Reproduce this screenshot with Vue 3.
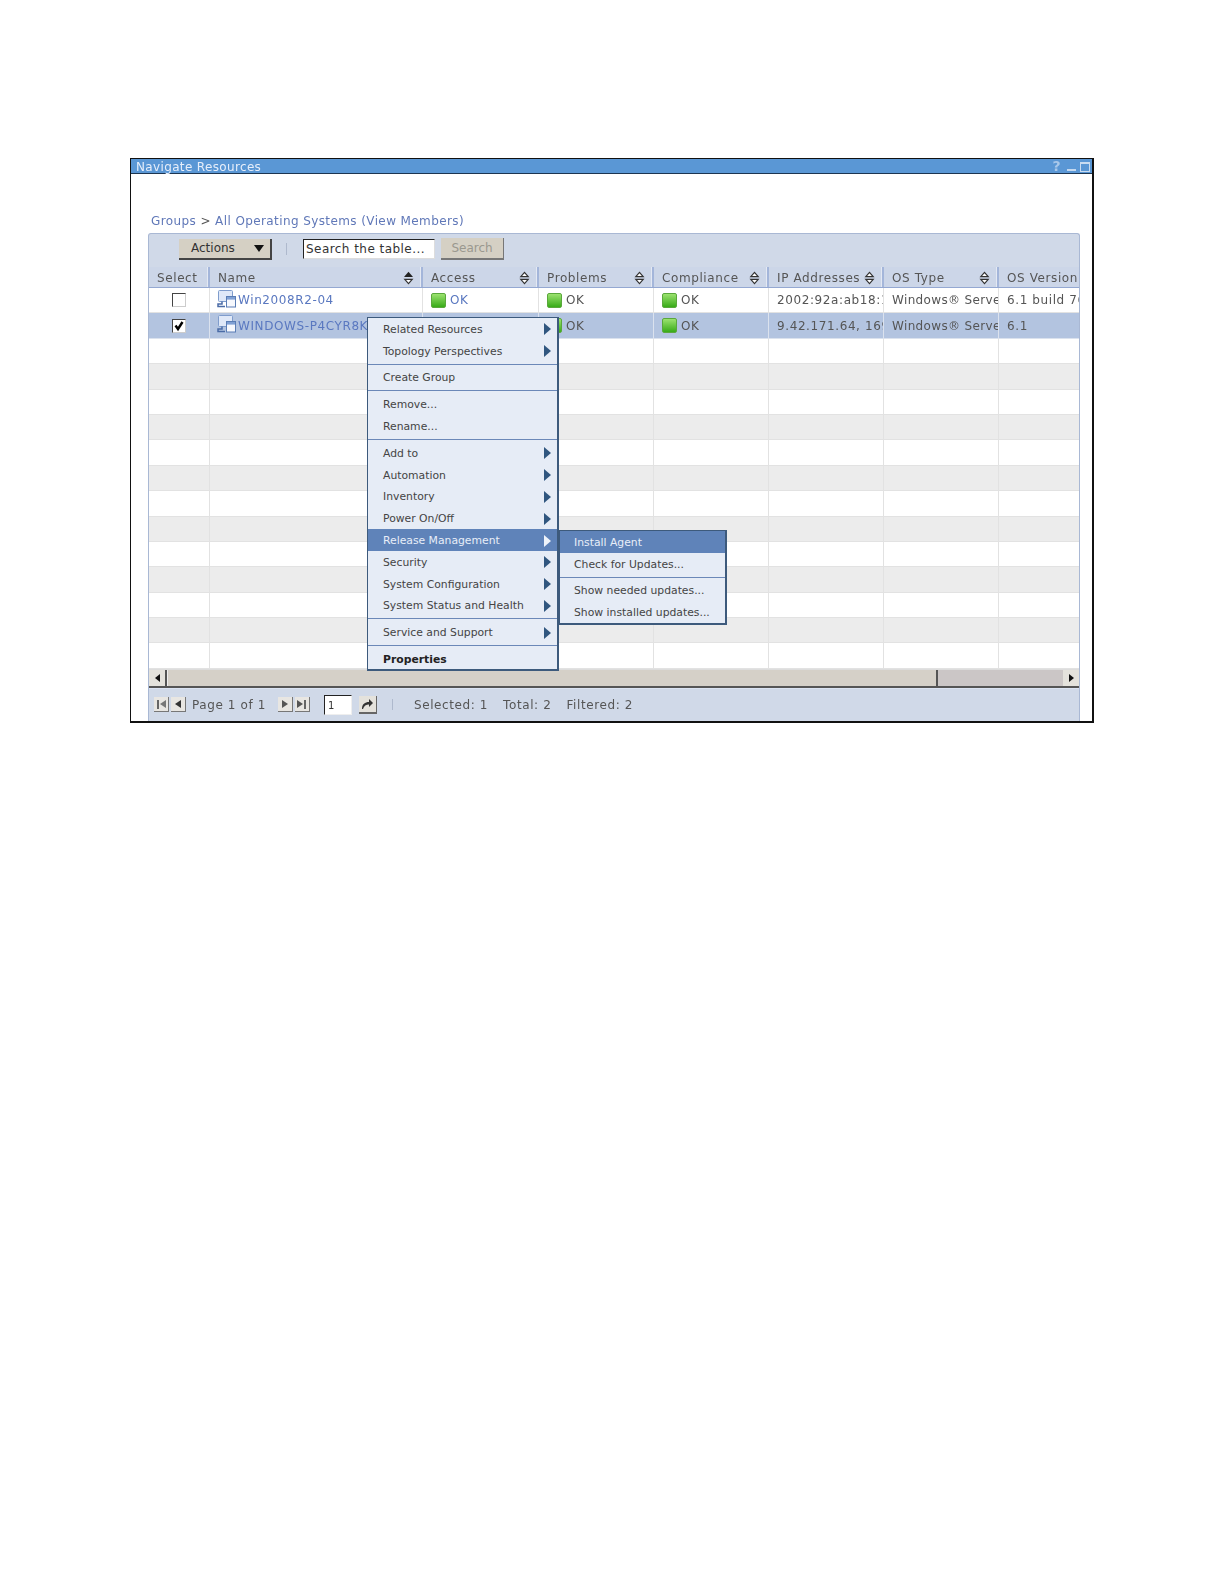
<script setup>
const columns = [
  { label: 'Select', width: 61, sort: '' },
  { label: 'Name', width: 213, sort: 'active' },
  { label: 'Access', width: 116, sort: 'both' },
  { label: 'Problems', width: 115, sort: 'both' },
  { label: 'Compliance', width: 115, sort: 'both' },
  { label: 'IP Addresses', width: 115, sort: 'both' },
  { label: 'OS Type', width: 115, sort: 'both' },
  { label: 'OS Version', width: 83, sort: '' },
]
const rows = [
  { name: 'Win2008R2-04', ip: '2002:92a:ab18:1:0:0', os: 'Windows® Server 2008', version: '6.1 build 7600', selected: false },
  { name: 'WINDOWS-P4CYR8K', ip: '9.42.171.64, 169.254.0.1', os: 'Windows® Server 2008', version: '6.1', selected: true },
]
const emptyRows = Array.from({ length: 13 }, (_, i) => i)
const menu = [
  [{ t: 'Related Resources', sub: true }, { t: 'Topology Perspectives', sub: true }],
  [{ t: 'Create Group' }],
  [{ t: 'Remove...' }, { t: 'Rename...' }],
  [
    { t: 'Add to', sub: true }, { t: 'Automation', sub: true }, { t: 'Inventory', sub: true },
    { t: 'Power On/Off', sub: true }, { t: 'Release Management', sub: true, active: true },
    { t: 'Security', sub: true }, { t: 'System Configuration', sub: true }, { t: 'System Status and Health', sub: true },
  ],
  [{ t: 'Service and Support', sub: true }],
  [{ t: 'Properties', bold: true }],
]
const submenu = [
  [{ t: 'Install Agent', active: true }, { t: 'Check for Updates...' }],
  [{ t: 'Show needed updates...' }, { t: 'Show installed updates...' }],
]
</script>

<template>
  <div class="page">
    <section class="window">
      <header class="titlebar">
        <span class="title">Navigate Resources</span>
        <span class="controls">
          <span class="help">?</span>
          <span class="min"></span>
          <span class="max"></span>
        </span>
      </header>
      <div class="content">
        <div class="crumbs">Groups <span class="gt">&gt;</span> All Operating Systems (View Members)</div>
        <div class="panel">
          <div class="toolbar">
            <button class="actions"><span>Actions</span><i class="caret"></i></button>
            <span class="tool-sep"></span>
            <span class="search-input">Search the table...</span>
            <button class="search-btn">Search</button>
          </div>
          <div class="grid">
            <div class="head">
              <div v-for="c in columns" :key="c.label" class="hcell" :style="{ width: c.width + 'px' }">
                <span class="hlabel">{{ c.label }}</span>
                <svg v-if="c.sort" class="sort" width="11" height="14" viewBox="0 0 11 14">
                  <path v-if="c.sort === 'active'" d="M5.5 0.8 L10 6 H1 Z" fill="#222" />
                  <path v-else d="M5.5 1.4 L9.2 5.6 H1.8 Z" fill="#fff" stroke="#333" stroke-width="1.2" />
                  <path d="M5.5 12.6 L9.2 8.4 H1.8 Z" fill="#fff" stroke="#333" stroke-width="1.2" />
                </svg>
              </div>
            </div>
            <div v-for="r in rows" :key="r.name" class="row" :class="{ selected: r.selected }">
              <div class="cell" :style="{ width: columns[0].width + 'px' }">
                <span class="check" :class="{ on: r.selected }">
                  <svg v-if="r.selected" width="12" height="12" viewBox="0 0 12 12"><path d="M2.5 5.5 L5 9 L9.5 2" fill="none" stroke="#000" stroke-width="2.4" /></svg>
                </span>
              </div>
              <div class="cell name" :style="{ width: columns[1].width + 'px' }">
                <svg class="os-icon" width="20" height="18" viewBox="0 0 20 18">
                  <rect x="1.5" y="0.5" width="14" height="11" rx="1" fill="#dfe8f8" stroke="#7f9ccc" />
                  <path d="M5 11.5 V14 H1 V16.5 H8" fill="none" stroke="#4a6ba6" stroke-width="1.5" />
                  <rect x="9.5" y="6.5" width="9" height="10.5" fill="#f6f8fd" stroke="#5a7db5" />
                  <rect x="10" y="7" width="8" height="2.6" fill="#7fa0d4" />
                </svg>
                <a class="link">{{ r.name }}</a>
              </div>
              <div v-for="(w, i) in [116, 115, 115]" :key="i" class="cell" :style="{ width: w + 'px' }">
                <span class="ok-icon"></span>
                <span :class="i === 0 ? 'ok-link' : 'ok'">OK</span>
              </div>
              <div class="cell text" :style="{ width: columns[5].width + 'px' }">{{ r.ip }}</div>
              <div class="cell text os" :style="{ width: columns[6].width + 'px' }">{{ r.os }}</div>
              <div class="cell text" :style="{ width: columns[7].width + 'px' }">{{ r.version }}</div>
            </div>
            <div v-for="n in emptyRows" :key="n" class="row empty" :class="{ alt: n % 2 === 1 }">
              <div v-for="c in columns" :key="c.label" class="cell" :style="{ width: c.width + 'px' }"></div>
            </div>
          </div>
          <div class="scrollbar">
            <span class="sb-btn first"><i class="tri left"></i></span>
            <span class="thumb"></span>
            <span class="track"></span>
            <span class="sb-btn"><i class="tri right"></i></span>
          </div>
          <footer class="pager">
            <span class="pg-group">
              <span class="pg-btn"><i class="bar"></i><i class="tri left small"></i></span>
              <span class="pg-btn"><i class="tri left small dark"></i></span>
            </span>
            <span class="pg-text page-of">Page 1 of 1</span>
            <span class="pg-group next">
              <span class="pg-btn"><i class="tri right small"></i></span>
              <span class="pg-btn"><i class="tri right small"></i><i class="bar"></i></span>
            </span>
            <span class="pg-input">1</span>
            <span class="go">
              <svg width="14" height="13" viewBox="0 0 14 13"><path d="M2 12 C2 7 5 5 9 5 V2 L13 6 L9 10 V7.4 C6 7.4 4 8.5 3 12 Z" fill="#333" /></svg>
            </span>
            <span class="pg-sep"></span>
            <span class="pg-text stat">Selected: 1</span>
            <span class="pg-text stat">Total: 2</span>
            <span class="pg-text stat">Filtered: 2</span>
          </footer>
        </div>
      </div>
      <nav class="menu main-menu">
        <div v-for="(g, gi) in menu" :key="gi" class="group">
          <div v-for="it in g" :key="it.t" class="item" :class="{ active: it.active, bold: it.bold }">
            <span>{{ it.t }}</span>
            <i v-if="it.sub" class="arrow"></i>
          </div>
        </div>
      </nav>
      <nav class="menu sub-menu">
        <div v-for="(g, gi) in submenu" :key="gi" class="group">
          <div v-for="it in g" :key="it.t" class="item" :class="{ active: it.active }">
            <span>{{ it.t }}</span>
          </div>
        </div>
      </nav>
    </section>
  </div>
</template>

<style>
html, body { background: #fff; }
</style>

<style scoped>
.page {
  width: 1224px;
  height: 1584px;
  padding: 158px 0 0 130px;
  box-sizing: border-box;
  font-family: "DejaVu Sans", Verdana, sans-serif;
  font-size: 11px;
  color: #555;
  overflow: hidden;
  background: #fff;
}
.window {
  position: relative;
  width: 964px;
  height: 565px;
  box-sizing: border-box;
  border: 1px solid #111;
  border-width: 1px 2px 2px 1px;
  filter: blur(0.45px);
}
.titlebar {
  height: 15px;
  background: #5a97d5;
  border-bottom: 1px solid #1d3550;
  box-sizing: border-box;
  display: flex;
  align-items: center;
  justify-content: space-between;
  padding: 1px 2px 0 5px;
  color: #e6eefa;
  font-size: 12px;
  letter-spacing: 0.35px;
}
.controls { display: flex; align-items: center; gap: 5px; }
.help { color: #a9c8ea; font-weight: bold; font-size: 14px; line-height: 13px; margin-right: 1px; }
.min { width: 9px; height: 2px; background: #c3d8ef; margin-top: 7px; }
.max { width: 8px; height: 7px; border: 1px solid #c9dcf1; border-top-width: 2px; margin-left: -1px; }
.content { padding: 38px 12px 0 17px; }
.crumbs {
  height: 21px;
  color: #6078b8;
  font-size: 12px;
  letter-spacing: 0.4px;
  padding-left: 3px;
  line-height: 18px;
}
.gt { color: #555; }
.panel {
  background: #d0d9e8;
  border: 1px solid #a9b8d4;
  border-bottom: 0;
  border-radius: 3px 3px 0 0;
  height: 488px;
  box-sizing: border-box;
  overflow: hidden;
}
.toolbar {
  height: 33px;
  display: flex;
  align-items: center;
  padding: 0 0 3px 30px;
  box-sizing: border-box;
}
.actions {
  width: 93px;
  height: 21px;
  padding: 0 6px 0 12px;
  display: flex;
  align-items: center;
  justify-content: space-between;
  background: #d5d0c4;
  border: 0;
  border-right: 2px solid #444;
  border-bottom: 2px solid #444;
  font: 12px "DejaVu Sans", sans-serif;
  color: #333;
}
.caret { border: 5.5px solid transparent; border-top: 7px solid #111; border-bottom: 0; }
.tool-sep { width: 1px; height: 12px; background: #aeb9cd; margin: 0 16px 0 14px; }
.search-input {
  width: 132px;
  height: 20px;
  box-sizing: border-box;
  background: #fff;
  border: 1px solid #222;
  border-right-color: #ddd;
  border-bottom-color: #ddd;
  padding-left: 2px;
  line-height: 18px;
  font-size: 12px;
  letter-spacing: 0.45px;
  color: #333;
  white-space: nowrap;
  overflow: hidden;
}
.search-btn {
  width: 63px;
  height: 22px;
  margin-left: 6px;
  padding: 0;
  border: 0;
  background: #d5d0c4;
  border-right: 1px solid #777;
  border-bottom: 2px solid #777;
  color: #9a988f;
  font: 12px "DejaVu Sans", sans-serif;
}
.head {
  display: flex;
  height: 21px;
  background: #ccd6e8;
  border-bottom: 1px solid #94a8d2;
  box-sizing: border-box;
  overflow: hidden;
}
.hcell {
  flex: none;
  display: flex;
  align-items: center;
  justify-content: space-between;
  box-sizing: border-box;
  padding: 2px 7px 0 8px;
  border-right: 2px solid #a4b6da;
  box-shadow: inset -1px 0 0 #e4e9f3;
  overflow: hidden;
  white-space: nowrap;
  font-size: 12px;
  letter-spacing: 0.6px;
  color: #555;
}
.hcell:last-child { border-right: 0; box-shadow: none; padding-right: 0; }
.row {
  display: flex;
  height: 25.4px;
  background: #fff;
  box-sizing: border-box;
  border-bottom: 1px solid #e2e2e2;
  overflow: hidden;
}
.row.alt { background: #ececec; }
.row.selected { background: #b3c4e0; border-bottom-color: #dbe2ee; }
.cell {
  display: flex;
  align-items: center;
  box-sizing: border-box;
  flex: none;
  padding: 0 0 0 8px;
  border-right: 1px solid #e2e2e2;
  overflow: hidden;
  white-space: nowrap;
  font-size: 12px;
  letter-spacing: 0.6px;
  color: #555;
}
.cell.os { letter-spacing: 0.35px; }
.cell:last-child { border-right: 0; }
.row.selected .cell { border-right-color: #dbe2ee; }
.cell:first-child { justify-content: center; padding: 0; }
.check {
  width: 14px;
  height: 14px;
  box-sizing: border-box;
  background: #fff;
  border: 1px solid #444;
  border-right-color: #ccc;
  border-bottom-color: #ccc;
  display: flex;
  align-items: center;
  justify-content: center;
}
.name { padding-left: 7px; }
.os-icon { flex: none; margin: -3px 1px 0 0; }
.link, .ok-link { color: #5a78c0; }
.ok-icon {
  width: 15px;
  height: 15px;
  flex: none;
  border-radius: 2px;
  background: linear-gradient(#9be26f, #38ab18);
  border: 1px solid #5aa83c;
  box-sizing: border-box;
  margin-right: 4px;
}
.scrollbar {
  display: flex;
  height: 19px;
  background: #cbc6c6;
  border-bottom: 2px solid #555;
  border-top: 1px solid #ddd;
  box-sizing: border-box;
}
.sb-btn {
  width: 16px;
  background: #e4e2dc;
  display: flex;
  align-items: center;
  justify-content: center;
  box-sizing: border-box;
}
.sb-btn.first { width: 18px; border-right: 2px solid #555; }
.thumb {
  width: 771px;
  background: #d5d0c8;
  border-right: 2px solid #555;
  border-left: 1px solid #eee;
  box-sizing: border-box;
}
.track { flex: 1; }
.tri { display: inline-block; border: 4px solid transparent; border-left: 0; border-right: 5px solid #111; }
.tri.right { border-right: 0; border-left: 5px solid #111; }
.tri.small { border-width: 4px; border-right-width: 6px; border-left-width: 0; border-right-color: #777; }
.tri.small.dark { border-right-color: #333; }
.tri.small.right { border-left-width: 6px; border-right-width: 0; border-left-color: #555; }
.pager {
  display: flex;
  align-items: center;
  height: 33px;
  padding: 0 0 0 5px;
  box-sizing: border-box;
  border-top: 1px solid #dbe3f2;
}
.pg-group { display: flex; gap: 2px; }
.pg-btn {
  width: 15px;
  height: 15px;
  background: #e8e6e2;
  border-right: 1px solid #777;
  border-bottom: 1px solid #777;
  display: flex;
  align-items: center;
  justify-content: center;
  box-sizing: border-box;
}
.bar { width: 2px; height: 9px; background: #666; margin: 0 1px; }
.pg-text { font-size: 12px; letter-spacing: 0.6px; color: #555; white-space: nowrap; }
.page-of { margin-left: 6px; }
.next { margin-left: 12px; }
.pg-input {
  width: 28px;
  height: 20px;
  margin-left: 14px;
  box-sizing: border-box;
  background: #fff;
  border: 1px solid #222;
  border-right-color: #eee;
  border-bottom-color: #eee;
  padding: 4px 0 0 3px;
  font-size: 10px;
  color: #333;
}
.go {
  width: 18px;
  height: 18px;
  margin-left: 7px;
  background: #e4e2dc;
  border-right: 1px solid #666;
  border-bottom: 2px solid #666;
  box-sizing: border-box;
  display: flex;
  align-items: center;
  justify-content: center;
}
.pg-sep { width: 1px; height: 11px; background: #aeb9cd; margin: 0 21px 0 15px; }
.stat { margin-right: 15px; }
.menu {
  position: absolute;
  box-sizing: border-box;
  background: #e6ecf6;
  border: 1px solid #3d5a7c;
  border-width: 1px 2px 2px 1px;
  font-family: "DejaVu Sans", sans-serif;
  font-size: 10.8px;
  color: #444;
}
.main-menu { left: 236px; top: 158px; width: 192px; height: 354px; }
.sub-menu { left: 428px; top: 371px; width: 168px; height: 95px; }
.group { border-bottom: 1px solid #6b88b8; padding-bottom: 2px; margin-bottom: 2px; }
.group:last-child { border-bottom: 0; padding-bottom: 0; margin-bottom: 0; }
.item {
  height: 21.8px;
  display: flex;
  align-items: center;
  justify-content: space-between;
  box-sizing: border-box;
  padding: 1px 6px 0 15px;
  white-space: nowrap;
}
.sub-menu .item { padding-left: 14px; }
.item.active { background: #5f83b9; color: #e8eef8; }
.item.bold { font-weight: bold; color: #222; }
.arrow { border: 6px solid transparent; border-left: 7px solid #30567f; border-right: 0; }
.item.active .arrow { border-left-color: #eef3fa; }
</style>
